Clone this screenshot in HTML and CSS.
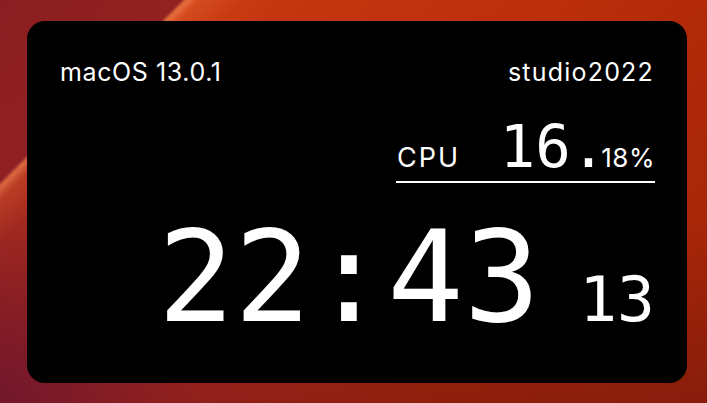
FILE: index.html
```html
<!DOCTYPE html>
<html lang="en">
<head>
<meta charset="utf-8">
<title>Status widget</title>
<link rel="stylesheet" href="styles.css">
</head>
<body>
<div class="desktop">
  <div class="card">
    <div class="top">
      <span class="os">macOS 13.0.1</span>
      <span class="host">studio2022</span>
    </div>
    <div class="cpu-row">
      <div class="cpu">
        <span class="cpu-label">CPU</span>
        <span class="cpu-val"><span class="cpu-int">16.</span><span class="cpu-frac">18%</span></span>
      </div>
    </div>
    <div class="clock">
      <span class="hm">22:43</span><span class="sec">13</span>
    </div>
  </div>
</div>
</body>
</html>
```
FILE: styles.css
```css
html, body {
  margin: 0;
  padding: 0;
}
body {
  width: 707px;
  height: 403px;
  overflow: hidden;
}
.desktop {
  width: 707px;
  height: 403px;
  box-sizing: border-box;
  padding: 21px 20px 20px 27px;
  background:
    linear-gradient(135deg, transparent 16.3%, rgba(255,150,90,0.55) 16.8%, rgba(255,120,60,0.18) 18%, transparent 22%),
    radial-gradient(circle at 0% 100%, rgba(112,22,46,0.95) 0px, rgba(140,30,40,0.55) 200px, rgba(140,30,40,0) 430px),
    linear-gradient(to bottom, rgba(90,15,20,0) 55%, rgba(90,15,20,0.35) 100%),
    linear-gradient(135deg, #8a1e21 0%, #93221f 16.5%, #cc4119 17%, #c4360f 26%, #bd2f0b 48%, #ad2808 72%, #a02408 100%);
}
.card {
  width: 660px;
  height: 362px;
  box-sizing: border-box;
  background: #000;
  border-radius: 18px;
  padding: 0 32px 0 33px;
  color: #fff;
  display: flex;
  flex-direction: column;
}
.top {
  display: flex;
  justify-content: space-between;
  align-items: baseline;
  font-family: "Inter", "Liberation Sans", sans-serif;
  font-size: 25px;
  letter-spacing: 0.6px;
  line-height: 22px;
  padding-top: 40px;
}
.host {
  margin-right: 1px;
  letter-spacing: 1.2px;
}
.cpu-row {
  display: flex;
  justify-content: flex-end;
  margin-top: 34px;
}
.cpu {
  width: 259px;
  display: flex;
  justify-content: space-between;
  align-items: baseline;
  border-bottom: 2px solid #fff;
  padding-bottom: 4px;
}
.cpu-label {
  font-family: "Inter", "Liberation Sans", sans-serif;
  font-size: 27px;
  letter-spacing: 2px;
  padding-left: 1px;
}
.cpu-int {
  font-family: "DejaVu Sans Mono", monospace;
  font-size: 59px;
  line-height: 60px;
}
.cpu-frac {
  font-family: "Inter", "Liberation Sans", sans-serif;
  font-size: 26px;
  letter-spacing: 0.5px;
  margin-left: -5px;
}
.clock {
  display: flex;
  justify-content: flex-end;
  align-items: baseline;
  font-family: "DejaVu Sans Mono", monospace;
  margin-top: 30px;
}
.hm {
  font-size: 127px;
  line-height: 128px;
}
.sec {
  font-size: 63px;
  margin-left: 39px;
}
```
